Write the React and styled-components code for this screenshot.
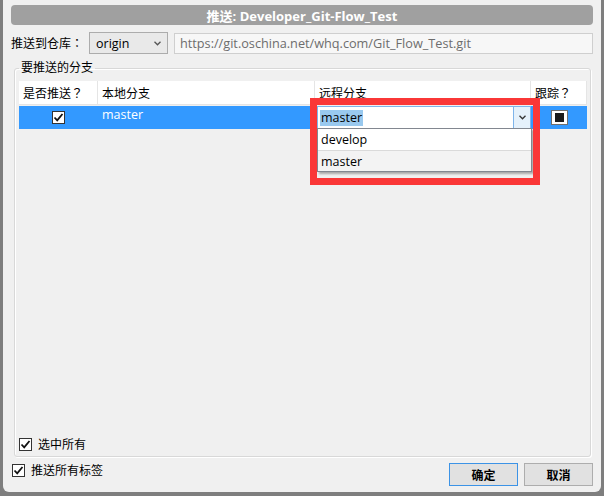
import React from "react";
import styled, { createGlobalStyle } from "styled-components";

const GlobalStyle = createGlobalStyle`
  html, body {
    margin: 0;
    padding: 0;
    background: #7e7e7e;
  }
  body {
    font-family: "Open Sans", "Noto Sans CJK SC", sans-serif;
    font-size: 12px;
    color: #000;
  }
`;

const Dialog = styled.div`
  position: relative;
  margin: 0 3px;
  height: 492px;
  box-sizing: border-box;
  background: #f0f0f0;
  border-radius: 0 0 6px 6px;
  padding: 5px 8px 0 8px;
  display: flex;
  flex-direction: column;
`;

const TitleBar = styled.div`
  height: 20px;
  background: #a0a0a0;
  border-radius: 4px;
  color: #fff;
  font-weight: 700;
  font-size: 13px;
  display: flex;
  align-items: center;
  justify-content: center;
`;

const RepoRow = styled.div`
  margin-top: 7px;
  height: 22px;
  display: flex;
  align-items: center;
`;

const Label = styled.span`
  width: 78px;
  white-space: nowrap;
`;

// full-width punctuation sits centred in its cell, as in the JP face
const Punct = styled.span`
  font-family: "Noto Sans CJK JP", sans-serif;
`;

const Select = styled.div`
  width: 79px;
  height: 22px;
  box-sizing: border-box;
  border: 1px solid #acacac;
  background: #e9e9e9;
  display: flex;
  align-items: center;
  justify-content: space-between;
  padding: 0 6px 0 6px;
  font-size: 12.5px;
`;

const UrlBox = styled.div`
  flex: 1;
  margin-left: 6px;
  height: 21px;
  box-sizing: border-box;
  border: 1px solid #cfcfcf;
  background: #f7f7f7;
  color: #6d6d6d;
  display: flex;
  align-items: center;
  padding: 0 5px;
  font-size: 12.7px;
`;

const Group = styled.fieldset`
  margin: 7px 2px 0 3px;
  padding: 6px 4px 5px 4px;
  border: 1px solid #d8d8d8;
  box-shadow: inset 1px 1px 0 #fff, 1px 1px 0 #fff;
  border-radius: 3px;
  min-width: 0;
`;

const Legend = styled.legend`
  padding: 0 2px;
  margin-left: 0;
  line-height: 14px;
`;

const GroupBody = styled.div`
  height: 370px;
  display: flex;
  flex-direction: column;
`;

const Table = styled.div`
  position: relative;
  display: grid;
  grid-template-columns: 79px 217px 216px 56px;
  grid-auto-rows: min-content;
  flex: 1;
  align-content: start;
`;

const HeadCell = styled.div`
  height: 24px;
  box-sizing: border-box;
  background: #fff;
  border-right: 1px solid #e5e5e5;
  border-bottom: 1px solid #e5e5e5;
  padding: 0 4px;
  display: flex;
  align-items: center;
  white-space: nowrap;
  &:last-of-type {
    border-right: none;
  }
`;

const RowCell = styled.div`
  height: 23px;
  margin-top: 1px;
  background: #3399ff;
  color: #fff;
  display: flex;
  align-items: ${(p) => (p.$center ? "center" : "flex-start")};
  justify-content: ${(p) => (p.$center ? "center" : "flex-start")};
  padding: ${(p) => (p.$center ? "0" : "0 4px")};
  line-height: 18px;
  box-sizing: border-box;
  font-size: 12.5px;
`;

const Combo = styled.div`
  margin-left: 2px;
  width: 214px;
  height: 23px;
  box-sizing: border-box;
  background: #fff;
  border: 1px solid #7eb4ea;
  display: flex;
  align-items: stretch;
  color: #000;
`;

const ComboText = styled.div`
  flex: 1;
  display: flex;
  align-items: center;
  padding-left: 2px;
  span {
    background: #99c9ef;
    padding: 0 1px;
    line-height: 16px;
  }
`;

const ComboButton = styled.div`
  width: 16px;
  background: #e5f1fb;
  border-left: 1px solid #7eb4ea;
  display: flex;
  align-items: center;
  justify-content: center;
`;

const DropList = styled.div`
  position: absolute;
  left: 298px;
  top: 47px;
  width: 213px;
  background: #fff;
  border: 1px solid #828790;
  box-shadow: 2px 2px 2px rgba(0, 0, 0, 0.3);
  z-index: 2;
`;

const DropItem = styled.div`
  height: 21px;
  box-sizing: border-box;
  display: flex;
  align-items: center;
  padding-left: 3px;
  font-size: 12.5px;
  background: ${(p) => (p.$hover ? "#f3f3f3" : "#fff")};
  border-top: ${(p) => (p.$hover ? "1px solid #dadada" : "none")};
`;

const RedFrame = styled.div`
  position: absolute;
  left: 291px;
  top: 17px;
  width: 230px;
  height: 87px;
  box-sizing: border-box;
  border: 7px solid #fa3737;
  z-index: 3;
  pointer-events: none;
`;

const Box = styled.div`
  width: 13px;
  height: 13px;
  box-sizing: border-box;
  border: 1px solid #333;
  background: #fff;
  display: flex;
  align-items: center;
  justify-content: center;
  flex-shrink: 0;
`;

const TrackBox = styled(Box)`
  width: 17px;
  height: 15px;
  border: 1px solid #6f6f6f;
  &::after {
    content: "";
    width: 9px;
    height: 9px;
    background: #1a1a1a;
  }
`;

const CheckRow = styled.label`
  display: flex;
  align-items: center;
  gap: 6px;
  height: 14px;
`;

const Footer = styled.div`
  display: flex;
  align-items: flex-start;
  justify-content: space-between;
  margin-top: 6px;
  padding-left: 1px;
`;

const Buttons = styled.div`
  display: flex;
  gap: 6px;
`;

const Button = styled.button`
  width: 69px;
  height: 23px;
  background: #e1e1e1;
  border: 1px solid ${(p) => (p.$primary ? "#3c93e6" : "#adadad")};
  font-family: "Noto Sans CJK SC", sans-serif;
  font-size: 12px;
  font-weight: 700;
  padding: 0;
`;

const Check = () => (
  <svg width="11" height="11" viewBox="0 0 11 11">
    <path d="M1.5 5.5 L4.2 8.3 L9.5 2" fill="none" stroke="#111" strokeWidth="1.8" />
  </svg>
);

const Chevron = ({ color = "#333" }) => (
  <svg width="7" height="5" viewBox="0 0 7 5">
    <path d="M0.5 0.8 L3.5 3.8 L6.5 0.8" fill="none" stroke={color} strokeWidth="1.3" />
  </svg>
);

const CheckBox = ({ children }) => (
  <CheckRow>
    <Box>
      <Check />
    </Box>
    <span>{children}</span>
  </CheckRow>
);

export default function App() {
  return (
    <>
      <GlobalStyle />
      <Dialog>
        <TitleBar>推送: Developer_Git-Flow_Test</TitleBar>
        <RepoRow>
          <Label>
            推送到仓库<Punct>：</Punct>
          </Label>
          <Select>
            <span>origin</span>
            <Chevron color="#555" />
          </Select>
          <UrlBox>https://git.oschina.net/whq.com/Git_Flow_Test.git</UrlBox>
        </RepoRow>
        <Group>
          <Legend>要推送的分支</Legend>
          <GroupBody>
            <Table>
              <HeadCell>
                是否推送<Punct>？</Punct>
              </HeadCell>
              <HeadCell>本地分支</HeadCell>
              <HeadCell>远程分支</HeadCell>
              <HeadCell>
                跟踪<Punct>？</Punct>
              </HeadCell>
              <RowCell $center>
                <Box>
                  <Check />
                </Box>
              </RowCell>
              <RowCell>master</RowCell>
              <RowCell $center>
                <Combo>
                  <ComboText>
                    <span>master</span>
                  </ComboText>
                  <ComboButton>
                    <Chevron />
                  </ComboButton>
                </Combo>
              </RowCell>
              <RowCell $center>
                <TrackBox />
              </RowCell>
              <DropList>
                <DropItem>develop</DropItem>
                <DropItem $hover>master</DropItem>
              </DropList>
              <RedFrame />
            </Table>
            <CheckBox>选中所有</CheckBox>
          </GroupBody>
        </Group>
        <Footer>
          <CheckBox>推送所有标签</CheckBox>
          <Buttons>
            <Button $primary>确定</Button>
            <Button>取消</Button>
          </Buttons>
        </Footer>
      </Dialog>
    </>
  );
}
